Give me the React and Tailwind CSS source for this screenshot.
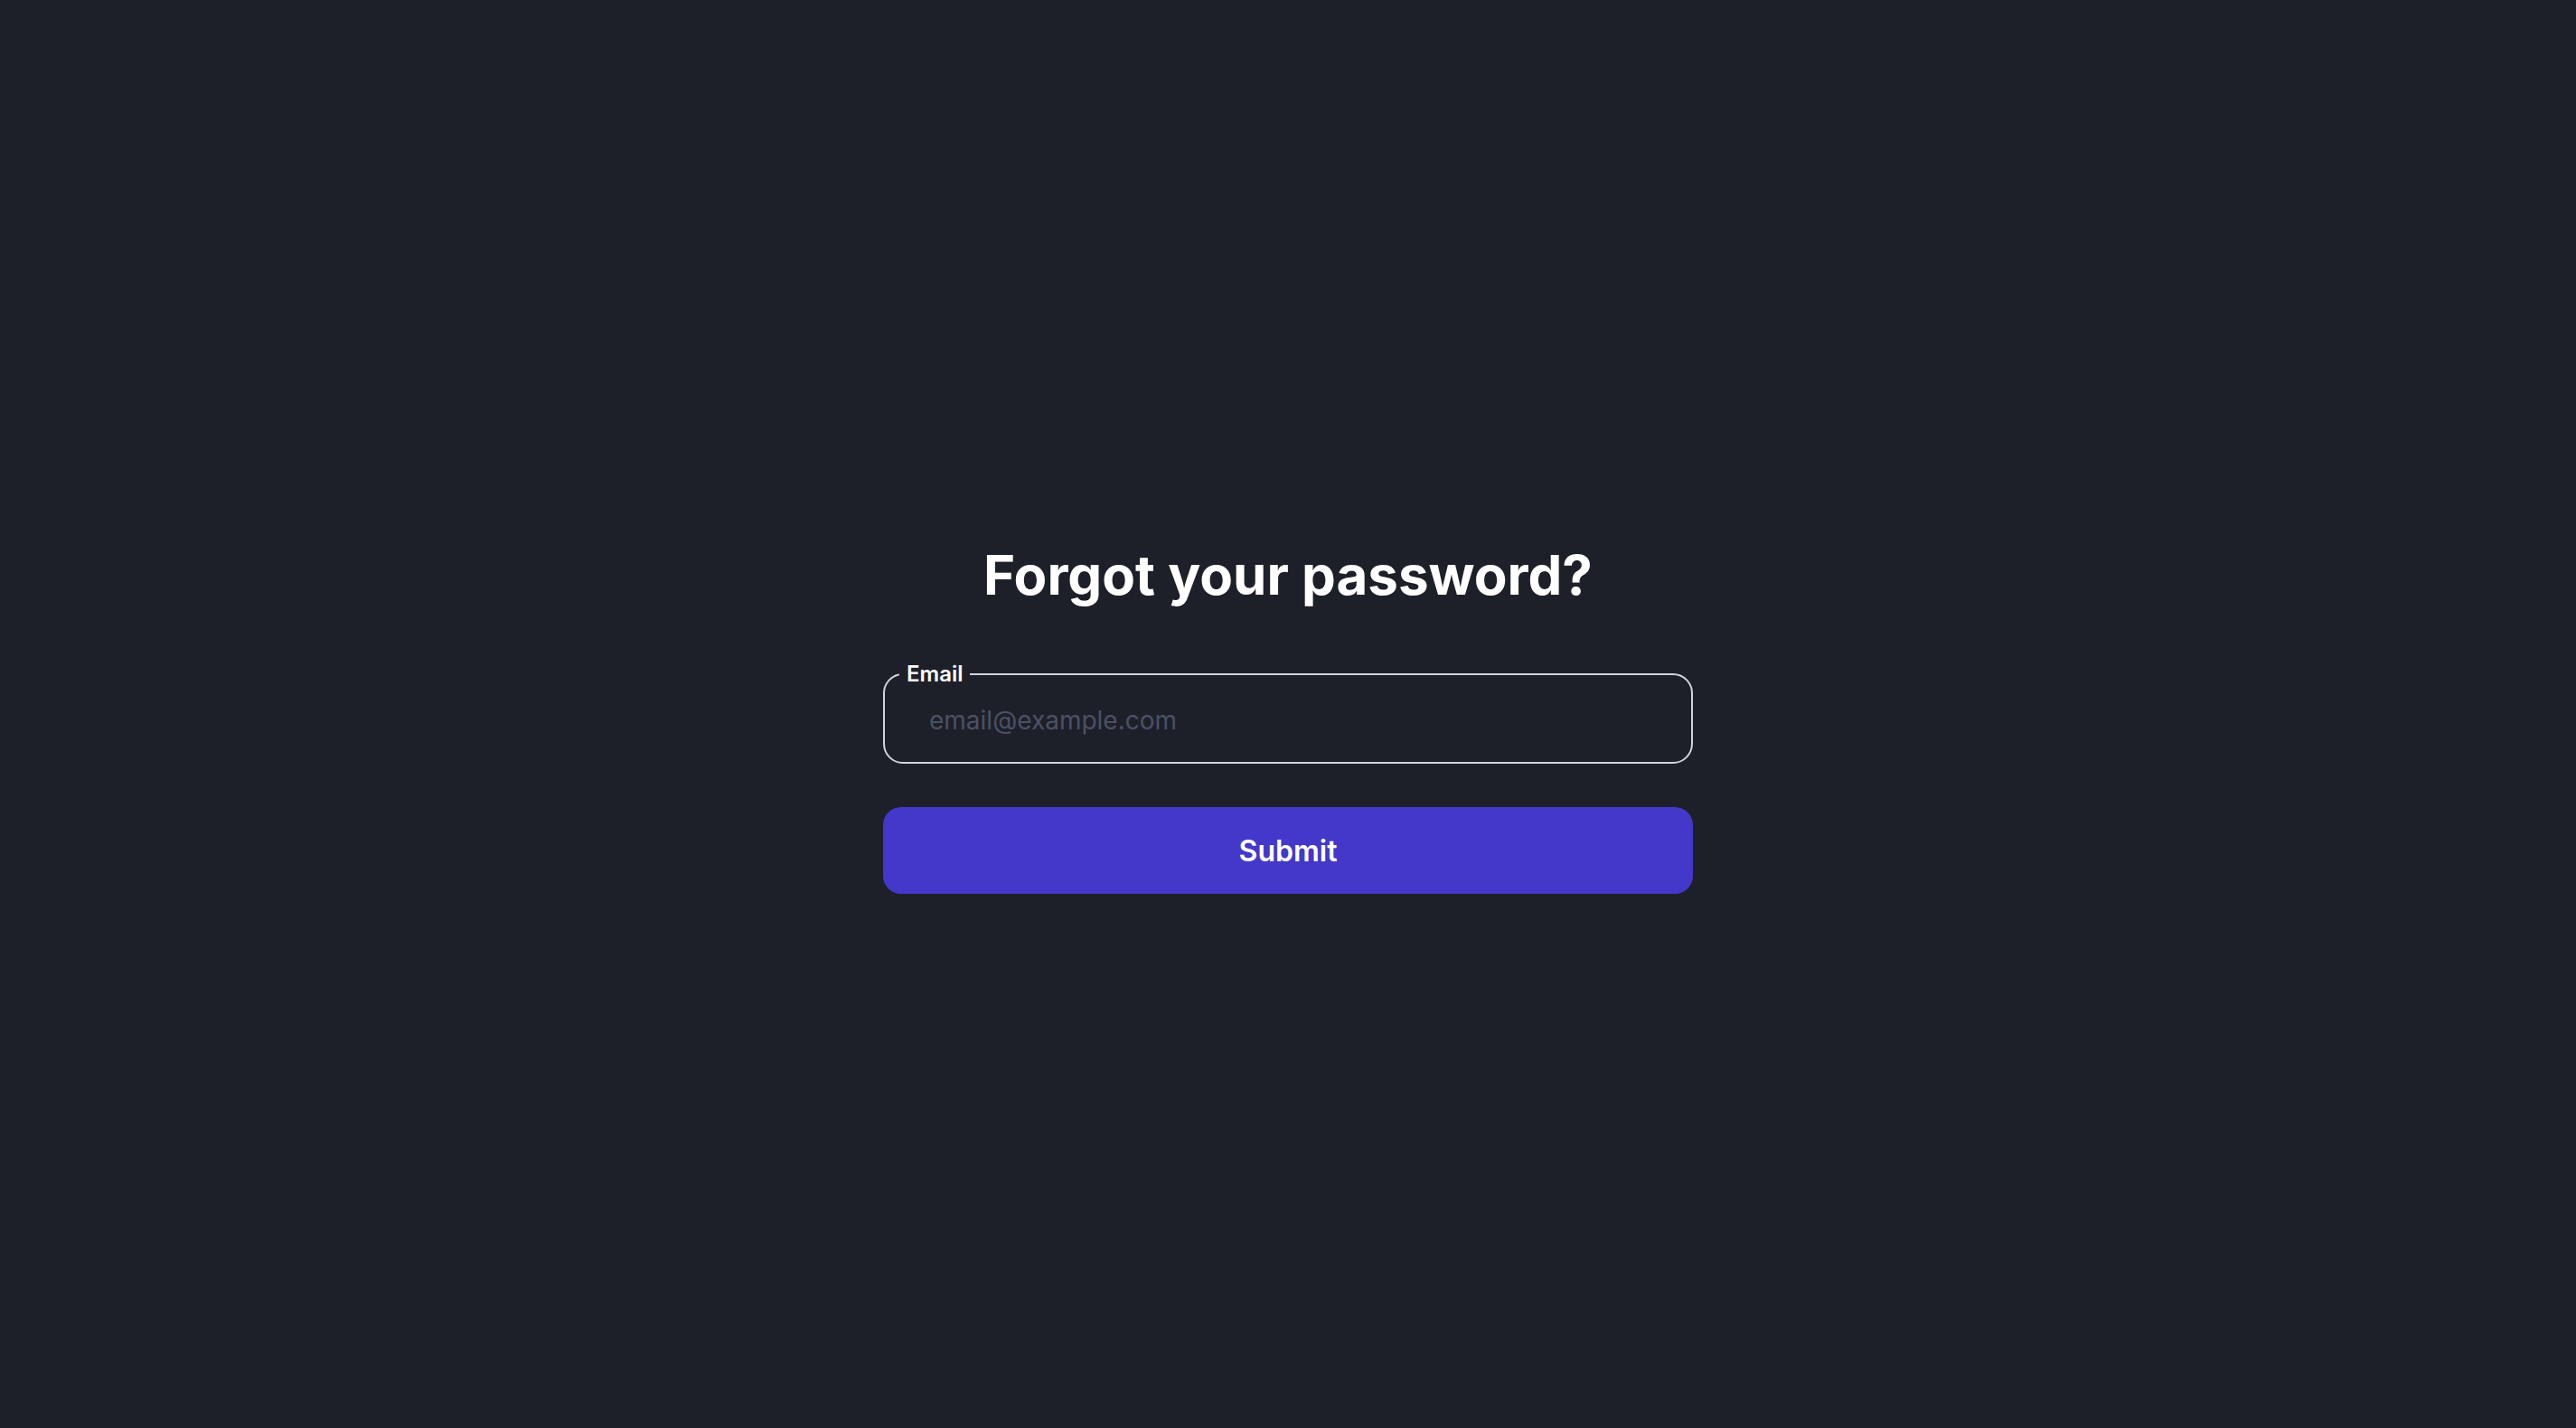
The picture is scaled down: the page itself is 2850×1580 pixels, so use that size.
import { useState } from "react";

function App() {
  const [email, setEmail] = useState("");

  const handleSubmit = (e) => {
    e.preventDefault();
  };

  return (
    <div
      className="min-h-screen bg-[#1e2029] flex items-center justify-center pt-[15px]"
      style={{ fontFamily: "Inter, 'Noto Sans', sans-serif" }}
    >
      <form onSubmit={handleSubmit} className="w-[896px] flex flex-col">
        <h1 className="text-center text-[60px] leading-none font-bold text-white">
          Forgot your password?
        </h1>

        <fieldset className="mt-[68px] rounded-[22px] border-2 border-[#d1d5db] pb-[10px]">
          <legend className="ml-[16px] px-[8px] text-[24px] leading-[24px] font-semibold text-white">
            Email
          </legend>
          <input
            type="email"
            value={email}
            onChange={(e) => setEmail(e.target.value)}
            placeholder="email@example.com"
            className="w-full h-[75px] pt-[2px] bg-transparent pl-[49px] pr-6 text-[28px] text-white placeholder:text-[#4b5163] outline-none"
          />
        </fieldset>

        <button
          type="submit"
          className="mt-[48px] h-[96px] pt-[2px] rounded-[20px] bg-[#4338ca] hover:bg-[#4f46e5] text-white text-[32px] font-semibold transition-colors"
        >
          Submit
        </button>
      </form>
    </div>
  );
}

export default App;
